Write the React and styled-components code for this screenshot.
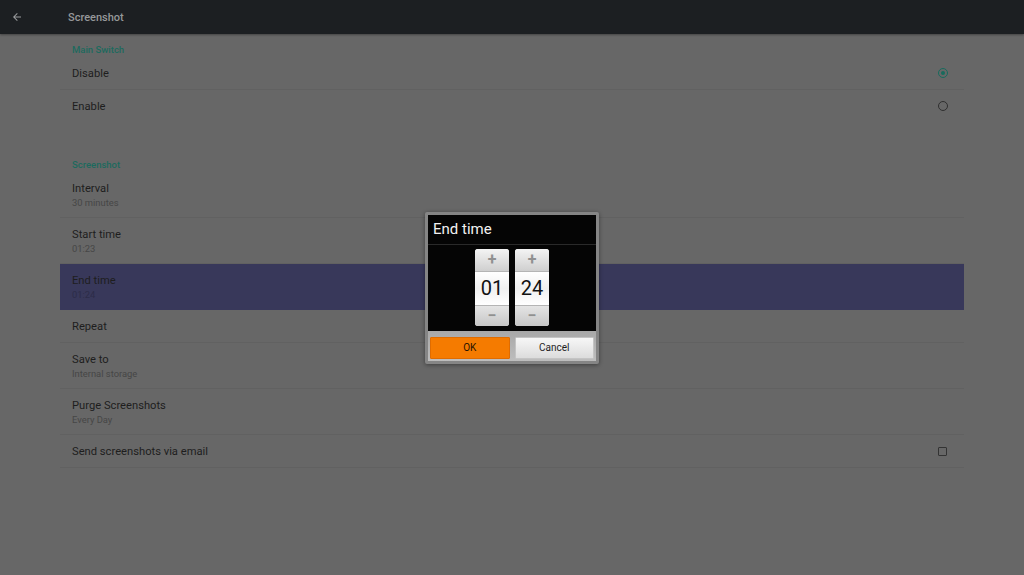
import React from "react";
import styled, { createGlobalStyle } from "styled-components";

const sections = [
  {
    title: "Main Switch",
    rows: [
      { label: "Disable", control: "radio-on" },
      { label: "Enable", control: "radio-off" },
    ],
  },
  {
    title: "Screenshot",
    rows: [
      { label: "Interval", summary: "30 minutes" },
      { label: "Start time", summary: "01:23" },
      { label: "End time", summary: "01:24", active: true },
      { label: "Repeat" },
      { label: "Save to", summary: "Internal storage" },
      { label: "Purge Screenshots", summary: "Every Day" },
      { label: "Send screenshots via email", control: "checkbox" },
    ],
  },
];

const App = () => {
  return (
    <>
      <GlobalStyle />
      <Page>
        <TopBar>
          <BackButton>
            <svg width="12" height="12" viewBox="0 0 24 24">
              <path
                d="M20 11H7.8l5.6-5.6L12 4l-8 8 8 8 1.4-1.4L7.8 13H20z"
                fill="#9a9c9e"
              />
            </svg>
          </BackButton>
          <BarTitle>Screenshot</BarTitle>
        </TopBar>

        <Content>
          {sections.map((section, i) => (
            <Section key={section.title} first={i === 0}>
              <SectionHeader>{section.title}</SectionHeader>
              {section.rows.map((row) => (
                <Row
                  key={row.label}
                  tall={!!row.summary}
                  active={row.active}
                  divided={section.title !== "Main Switch" || row.label === "Disable"}
                >
                  <RowText>
                    <RowLabel>{row.label}</RowLabel>
                    {row.summary && (
                      <RowSummary active={row.active}>{row.summary}</RowSummary>
                    )}
                  </RowText>
                  {row.control === "radio-on" && <Radio checked />}
                  {row.control === "radio-off" && <Radio />}
                  {row.control === "checkbox" && <Checkbox />}
                </Row>
              ))}
            </Section>
          ))}
        </Content>

        <Overlay>
          <Dialog>
            <DialogTitle>End time</DialogTitle>
            <PickerArea>
              <Picker value="01" />
              <Picker value="24" />
            </PickerArea>
            <ButtonBar>
              <DialogButton primary>OK</DialogButton>
              <DialogButton>Cancel</DialogButton>
            </ButtonBar>
          </Dialog>
        </Overlay>
      </Page>
    </>
  );
};

const Picker = ({ value }) => (
  <PickerColumn>
    <StepButton top>+</StepButton>
    <PickerValue>{value}</PickerValue>
    <StepButton>−</StepButton>
  </PickerColumn>
);

const GlobalStyle = createGlobalStyle`
  html, body {
    margin: 0;
    background: #676767;
    font-family: Roboto, "Liberation Sans", sans-serif;
  }
`;

const Page = styled.div`
  position: relative;
  width: 1024px;
  height: 575px;
  overflow: hidden;
  background: #676767;
`;

const TopBar = styled.div`
  height: 34px;
  display: flex;
  align-items: center;
  background: #1c1f22;
  box-shadow: 0 1px 2px rgba(0, 0, 0, 0.35);
`;

const BackButton = styled.div`
  width: 34px;
  display: flex;
  justify-content: center;
  align-items: center;
`;

const BarTitle = styled.div`
  margin-left: 34px;
  color: #96989a;
  font-size: 11px;
  font-weight: 500;
`;

const Content = styled.div`
  margin: 0 60px;
`;

const Section = styled.div`
  margin-top: ${(p) => (p.first ? "0" : "26px")};
`;

const SectionHeader = styled.div`
  padding: 9px 12px 0;
  line-height: 14px;
  font-size: 9.5px;
  font-weight: 500;
  color: #1d6a5e;
`;

const Row = styled.div`
  height: ${(p) => (p.tall ? "46px" : "33px")};
  box-sizing: border-box;
  padding: 2px 16px 0 12px;
  display: flex;
  align-items: center;
  justify-content: space-between;
  background: ${(p) => (p.active ? "#38385a" : "transparent")};
  border-bottom: 1px solid
    ${(p) => (p.divided && !p.active ? "#616161" : "transparent")};
`;

const RowText = styled.div`
  display: flex;
  flex-direction: column;
`;

const RowLabel = styled.div`
  font-size: 11.2px;
  line-height: 14px;
  color: #1e1e1e;
`;

const RowSummary = styled.div`
  font-size: 9.4px;
  line-height: 13px;
  color: ${(p) => (p.active ? "#2c2c48" : "#464646")};
`;

const Radio = styled.div`
  width: 8px;
  height: 8px;
  margin-top: -2px;
  border-radius: 50%;
  border: 1.5px solid ${(p) => (p.checked ? "#176b5d" : "#2f2f2f")};
  display: flex;
  align-items: center;
  justify-content: center;

  &::after {
    content: "";
    width: 4px;
    height: 4px;
    border-radius: 50%;
    background: ${(p) => (p.checked ? "#176b5d" : "transparent")};
  }
`;

const Checkbox = styled.div`
  width: 7px;
  height: 7px;
  margin: -2px 1px 0 0;
  border: 1.5px solid #333;
  border-radius: 1px;
`;

const Overlay = styled.div`
  position: absolute;
  inset: 0;
  display: flex;
  align-items: center;
  justify-content: center;
`;

const Dialog = styled.div`
  width: 168px;
  border: 3px solid #858585;
  border-radius: 2px;
  background: #050505;
  box-shadow: 0 1px 4px rgba(0, 0, 0, 0.4);
  display: flex;
  flex-direction: column;
`;

const DialogTitle = styled.div`
  height: 30px;
  box-sizing: border-box;
  padding: 0 5px;
  display: flex;
  align-items: center;
  color: #f2f2f2;
  font-size: 15px;
  border-bottom: 1px solid #2a2a2a;
`;

const PickerArea = styled.div`
  display: flex;
  justify-content: center;
  gap: 6px;
  padding: 4px 0 5px;
`;

const PickerColumn = styled.div`
  width: 34px;
  display: flex;
  flex-direction: column;
  border-radius: 3px;
  overflow: hidden;
  background: #fff;
`;

const StepButton = styled.div`
  height: ${(p) => (p.top ? "22px" : "20px")};
  display: flex;
  align-items: center;
  justify-content: center;
  font-size: 16px;
  font-weight: 700;
  color: #909090;
  background: ${(p) =>
    p.top
      ? "linear-gradient(#f4f4f4, #cfcfcf)"
      : "linear-gradient(#e4e4e4, #c6c6c6)"};
  border-${(p) => (p.top ? "bottom" : "top")}: 1px solid #b4b4b4;
`;

const PickerValue = styled.div`
  height: 33px;
  display: flex;
  align-items: center;
  justify-content: center;
  font-size: 20px;
  color: #111;
  background: linear-gradient(#ffffff, #f0f0f0 50%, #ffffff);
`;

const ButtonBar = styled.div`
  height: 30px;
  box-sizing: border-box;
  display: flex;
  gap: 5px;
  padding: 6px 2px 2px;
  background: linear-gradient(#a8a8a8, #bdbdbd);
`;

const DialogButton = styled.div`
  flex: 1;
  height: 22px;
  box-sizing: border-box;
  display: flex;
  align-items: center;
  justify-content: center;
  font-size: 10px;
  color: ${(p) => (p.primary ? "#2a1400" : "#1e1e1e")};
  background: ${(p) =>
    p.primary ? "#f57b00" : "linear-gradient(#f7f7f7, #dcdcdc)"};
  border: 1px solid ${(p) => (p.primary ? "#e06c00" : "#c4c4c4")};
  border-radius: 1px;
`;

export default App;
